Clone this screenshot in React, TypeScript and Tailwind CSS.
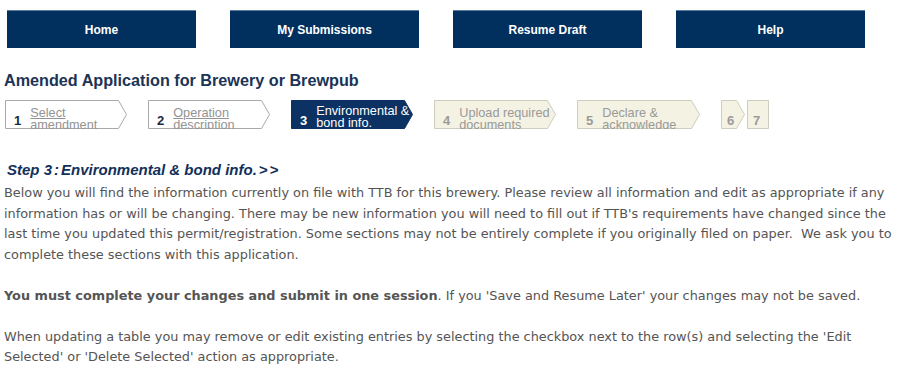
import React from "react";

const navItems = ["Home", "My Submissions", "Resume Draft", "Help"];

type Step = {
  num: string;
  label?: [string, string];
  width: number;
  state: "done" | "active" | "todo";
  arrow: boolean;
};

const steps: Step[] = [
  { num: "1", label: ["Select", "amendment"], width: 122, state: "done", arrow: true },
  { num: "2", label: ["Operation", "description"], width: 122, state: "done", arrow: true },
  { num: "3", label: ["Environmental &", "bond info."], width: 122, state: "active", arrow: true },
  { num: "4", label: ["Upload required", "documents"], width: 122, state: "todo", arrow: true },
  { num: "5", label: ["Declare &", "acknowledge"], width: 123, state: "todo", arrow: true },
  { num: "6", width: 24, state: "todo", arrow: true },
  { num: "7", width: 22, state: "todo", arrow: false },
];

function StepBox({ step }: { step: Step }) {
  const w = step.width;
  const h = 29;
  const points = step.arrow
    ? `0.5,0.5 ${w - 8.5},0.5 ${w - 0.5},${h / 2} ${w - 8.5},${h - 0.5} 0.5,${h - 0.5}`
    : `0.5,0.5 ${w - 0.5},0.5 ${w - 0.5},${h - 0.5} 0.5,${h - 0.5}`;
  const fill = step.state === "active" ? "#0b3262" : step.state === "done" ? "#ffffff" : "#f4f2e3";
  const stroke = step.state === "active" ? "#0b3262" : step.state === "done" ? "#a9a9a9" : "#cfcdbd";

  const numColor =
    step.state === "active" ? "text-white" : step.state === "done" ? "text-[#1a2a44]" : "text-[#9a9a9a]";
  const labelColor =
    step.state === "active"
      ? "text-white"
      : step.state === "done"
      ? "text-[#939393] underline"
      : "text-[#999999]";

  return (
    <div className="relative h-[29px] shrink-0 overflow-hidden" style={{ width: w }}>
      <svg className="absolute inset-0" width={w} height={h}>
        <polygon points={points} fill={fill} stroke={stroke} strokeWidth={1} />
      </svg>
      {step.label ? (
        <div className="relative flex h-full items-start pl-[9px]">
          <span className={`mt-[14px] text-[13px] font-bold leading-[14px] ${numColor}`}>{step.num}</span>
          <span
            className={`ml-[9px] text-[12.7px] leading-[12px] ${labelColor} ${
              step.state === "active" ? "mt-[5px]" : "mt-[7px]"
            }`}
          >
            {step.label[0]}
            <br />
            {step.label[1]}
          </span>
        </div>
      ) : (
        <div className="relative flex h-full items-start pl-[6px]">
          <span className={`mt-[14px] text-[13px] font-bold leading-[14px] ${numColor}`}>{step.num}</span>
        </div>
      )}
    </div>
  );
}

export default function App() {
  return (
    <div className="h-[369px] w-[903px] overflow-hidden bg-white font-['Liberation_Sans',Arial,sans-serif]">
      {/* Top navigation */}
      <div className="flex gap-[34px] pl-[7px] pt-[10px]">
        {navItems.map((item) => (
          <div
            key={item}
            className="flex h-[38px] w-[189px] items-center justify-center border-t border-[#5a7ca3] bg-[#01305f] text-[12px] font-bold text-white"
          >
            {item}
          </div>
        ))}
      </div>

      {/* Title */}
      <h1 className="mt-[22px] pl-[4px] text-[16.2px] font-bold leading-[20px] text-[#1b3456]">
        Amended Application for Brewery or Brewpub
      </h1>

      {/* Progress steps */}
      <div className="mt-[10px] flex pl-[5px]">
        {steps.map((s, i) => (
          <div key={s.num} className={i === 0 ? "" : i === 6 ? "ml-[2px]" : "ml-[21px]"}>
            <StepBox step={s} />
          </div>
        ))}
      </div>

      {/* Step heading */}
      <h2 className="mt-[32px] pl-[7px] text-[15px] font-bold italic leading-[18px] text-[#12305a]">
        Step 3<span className="mx-[2px]">:</span>Environmental &amp; bond info.<span className="ml-[2px] tracking-[2px]">&gt;&gt;</span>
      </h2>

      {/* Body */}
      <div className="mt-[4px] px-[4px] font-['DejaVu_Sans',Verdana,sans-serif] text-[12.85px] leading-[20.5px] text-[#555555]">
        <p>
          Below you will find the information currently on file with TTB for this brewery. Please review all
          information and edit as appropriate if any information has or will be changing. There may be new
          information you will need to fill out if TTB's requirements have changed since the last time you
          updated this permit/registration. Some sections may not be entirely complete if you originally filed on
          paper.&nbsp; We ask you to complete these sections with this application.
        </p>
        <br />
        <p>
          <b>You must complete your changes and submit in one session</b>. If you 'Save and Resume Later' your
          changes may not be saved.
        </p>
        <br />
        <p>
          When updating a table you may remove or edit existing entries by selecting the checkbox next to the
          row(s) and selecting the 'Edit Selected' or 'Delete Selected' action as appropriate.
        </p>
      </div>
    </div>
  );
}
